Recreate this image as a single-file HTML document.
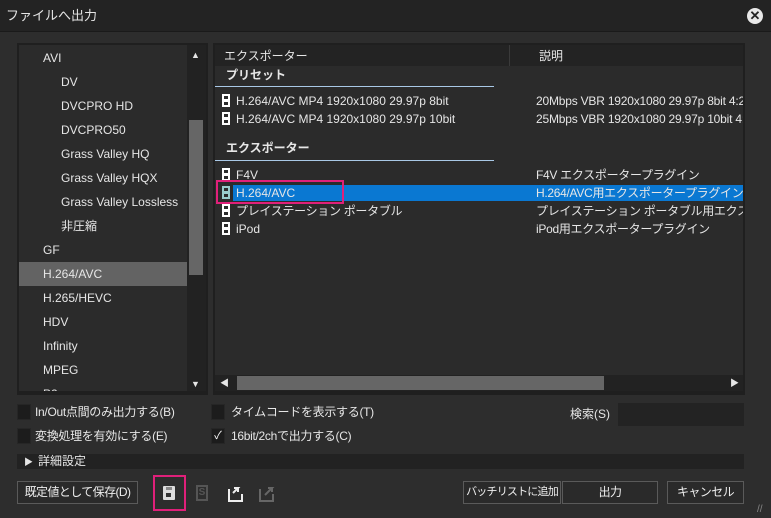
<!DOCTYPE html>
<html><head><meta charset="utf-8"><style>
*{margin:0;padding:0;box-sizing:border-box}
body{width:771px;height:518px;background:#2d2d2d;font-family:"Liberation Sans","Noto Sans CJK JP",sans-serif;font-size:12px;color:#e6e6e6;position:relative;overflow:hidden}
.a{position:absolute}
.t{position:absolute;white-space:nowrap;line-height:16px}
.cb{position:absolute;width:14px;height:16px;background:#1c1c1c;border:1px solid #262626}
.btn{position:absolute;top:481px;height:23px;border:1px solid #5a5a5a;background:#2a2a2a;text-align:center;line-height:21px;font-size:12px;color:#eee;white-space:nowrap;letter-spacing:-0.6px;overflow:hidden}
.film{position:absolute;width:8px;height:13px;background:#fff;}
.film:before,.film:after{content:"";position:absolute;left:2px;width:4px;height:3px;background:#2b2b2b}
.film:before{top:2px}.film:after{top:8px}
</style></head><body>
<div class="a" style="left:0;top:0;width:771px;height:32px;background:#232323;border-bottom:1px solid #1a1a1a"></div>
<div class="t" style="left:6px;top:8px;font-size:13px">ファイルへ出力</div>
<div class="a" style="left:747px;top:8px;width:16px;height:16px;border-radius:50%;background:#e8e8e8;color:#232323;font-size:13px;font-weight:bold;text-align:center;line-height:16px">✕</div>

<div class="a" style="left:17px;top:43px;width:191px;height:352px;background:#1f1f1f"></div>
<div class="a" style="left:19px;top:45px;width:168px;height:346px;background:#2b2b2b;overflow:hidden">
<div class="a" style="left:0;top:217px;width:168px;height:24px;background:#636363"></div>
<div class="t" style="left:24px;top:5px">AVI</div>
<div class="t" style="left:42px;top:29px">DV</div>
<div class="t" style="left:42px;top:53px">DVCPRO HD</div>
<div class="t" style="left:42px;top:77px">DVCPRO50</div>
<div class="t" style="left:42px;top:101px">Grass Valley HQ</div>
<div class="t" style="left:42px;top:125px">Grass Valley HQX</div>
<div class="t" style="left:42px;top:149px">Grass Valley Lossless</div>
<div class="t" style="left:42px;top:173px">非圧縮</div>
<div class="t" style="left:24px;top:197px">GF</div>
<div class="t" style="left:24px;top:221px">H.264/AVC</div>
<div class="t" style="left:24px;top:245px">H.265/HEVC</div>
<div class="t" style="left:24px;top:269px">HDV</div>
<div class="t" style="left:24px;top:293px">Infinity</div>
<div class="t" style="left:24px;top:317px">MPEG</div>
<div class="t" style="left:24px;top:341px">P2</div>
</div>
<div class="a" style="left:187px;top:45px;width:19px;height:346px;background:#222"></div>
<div class="a" style="left:189px;top:120px;width:14px;height:155px;background:#666"></div>
<div class="t" style="left:191px;top:47px;font-size:9px">▲</div>
<div class="t" style="left:191px;top:376px;font-size:9px">▼</div>

<div class="a" style="left:213px;top:43px;width:532px;height:352px;background:#1f1f1f"></div>
<div class="a" style="left:215px;top:45px;width:528px;height:346px;background:#2b2b2b;overflow:hidden">
<div class="a" style="left:0;top:0;width:528px;height:21px;background:#232323"></div>
<div class="a" style="left:294px;top:0;width:1px;height:21px;background:#3a3a3a"></div>
<div class="t" style="left:9px;top:3px">エクスポーター</div>
<div class="t" style="left:324px;top:3px">説明</div>
<div class="t" style="left:11px;top:22px;font-weight:bold">プリセット</div>
<div class="a" style="left:0;top:41px;width:279px;height:1px;background:#a9c8e6"></div>
<div class="film" style="left:7px;top:49px"></div>
<div class="t" style="left:21px;top:48px">H.264/AVC MP4 1920x1080 29.97p 8bit</div>
<div class="t" style="left:321px;top:48px;letter-spacing:-0.2px">20Mbps VBR 1920x1080 29.97p 8bit 4:2:0</div>
<div class="film" style="left:7px;top:67px"></div>
<div class="t" style="left:21px;top:66px">H.264/AVC MP4 1920x1080 29.97p 10bit</div>
<div class="t" style="left:321px;top:66px;letter-spacing:-0.2px">25Mbps VBR 1920x1080 29.97p 10bit 4:2:0</div>
<div class="t" style="left:11px;top:95px;font-weight:bold">エクスポーター</div>
<div class="a" style="left:0;top:115px;width:279px;height:1px;background:#a9c8e6"></div>
<div class="film" style="left:7px;top:123px"></div>
<div class="t" style="left:21px;top:122px">F4V</div>
<div class="t" style="left:321px;top:122px;letter-spacing:-0.3px">F4V エクスポータープラグイン</div>
<div class="a" style="left:18px;top:140px;width:510px;height:16px;background:#0a78d2"></div>
<div class="film" style="left:7px;top:141px;background:#9cc"></div>
<div class="t" style="left:21px;top:140px">H.264/AVC</div>
<div class="t" style="left:321px;top:140px;letter-spacing:-0.3px">H.264/AVC用エクスポータープラグイン</div>
<div class="film" style="left:7px;top:159px"></div>
<div class="t" style="left:21px;top:158px;letter-spacing:-0.3px">プレイステーション ポータブル</div>
<div class="t" style="left:321px;top:158px;letter-spacing:-0.3px">プレイステーション ポータブル用エクスポータープラグイン</div>
<div class="film" style="left:7px;top:177px"></div>
<div class="t" style="left:21px;top:176px">iPod</div>
<div class="t" style="left:321px;top:176px;letter-spacing:-0.3px">iPod用エクスポータープラグイン</div>
<div class="a" style="left:0;top:330px;width:528px;height:16px;background:#222"></div>
<div class="a" style="left:22px;top:331px;width:367px;height:14px;background:#666"></div>
<div class="t" style="left:5px;top:330px;font-size:9px">◀</div>
<div class="t" style="left:515px;top:330px;font-size:9px">▶</div>
</div>
<div class="a" style="left:216px;top:180px;width:128px;height:24px;border:2px solid #e0207a"></div>

<div class="cb" style="left:17px;top:404px"></div>
<div class="t" style="left:35px;top:404px;letter-spacing:-0.3px">In/Out点間のみ出力する(B)</div>
<div class="cb" style="left:17px;top:428px"></div>
<div class="t" style="left:35px;top:428px;letter-spacing:-0.3px">変換処理を有効にする(E)</div>
<div class="cb" style="left:211px;top:404px"></div>
<div class="t" style="left:231px;top:404px;letter-spacing:-0.3px">タイムコードを表示する(T)</div>
<div class="cb" style="left:211px;top:428px;color:#fff;font-size:11px;text-align:center;line-height:14px">✓</div>
<div class="t" style="left:231px;top:428px;letter-spacing:-0.3px">16bit/2chで出力する(C)</div>
<div class="t" style="left:570px;top:406px">検索(S)</div>
<div class="a" style="left:618px;top:403px;width:126px;height:23px;background:#232323"></div>
<div class="a" style="left:17px;top:454px;width:727px;height:15px;background:#222"></div>
<div class="t" style="left:24px;top:454px;font-size:9px">▶</div>
<div class="t" style="left:38px;top:453px">詳細設定</div>

<div class="btn" style="left:17px;width:121px">既定値として保存(D)</div>
<div class="a" style="left:153px;top:475px;width:33px;height:36px;border:2px solid #e0207a"></div>
<div class="a" style="left:163px;top:486px;width:12px;height:14px;background:#ddd;border-radius:1px"></div>
<div class="a" style="left:166px;top:493px;width:5px;height:4px;background:#333"></div>
<div class="a" style="left:166px;top:487px;width:6px;height:3px;background:#888"></div>
<div class="a" style="left:196px;top:485px;width:12px;height:16px;border:2px solid #555;color:#555;font-size:10px;text-align:center;line-height:11px;font-weight:bold">S</div>
<svg class="a" style="left:226px;top:483px" width="20" height="20"><path d="M3 6v12h13v-7" stroke="#eee" stroke-width="2" fill="none"/><path d="M7 10l5-5h-4M12 5v4" stroke="#eee" stroke-width="2" fill="none"/></svg>
<svg class="a" style="left:257px;top:483px" width="20" height="20"><path d="M3 6v12h13v-7" stroke="#666" stroke-width="2" fill="none"/><path d="M8 12l7-7h-4M15 5v4" stroke="#666" stroke-width="2" fill="none"/></svg>
<div class="btn" style="left:463px;width:98px;font-size:11px;letter-spacing:-0.8px">バッチリストに追加</div>
<div class="btn" style="left:562px;width:96px">出力</div>
<div class="btn" style="left:667px;width:77px">キャンセル</div>
<div class="t" style="left:757px;top:502px;color:#888;font-size:10px">//</div>
</body></html>
